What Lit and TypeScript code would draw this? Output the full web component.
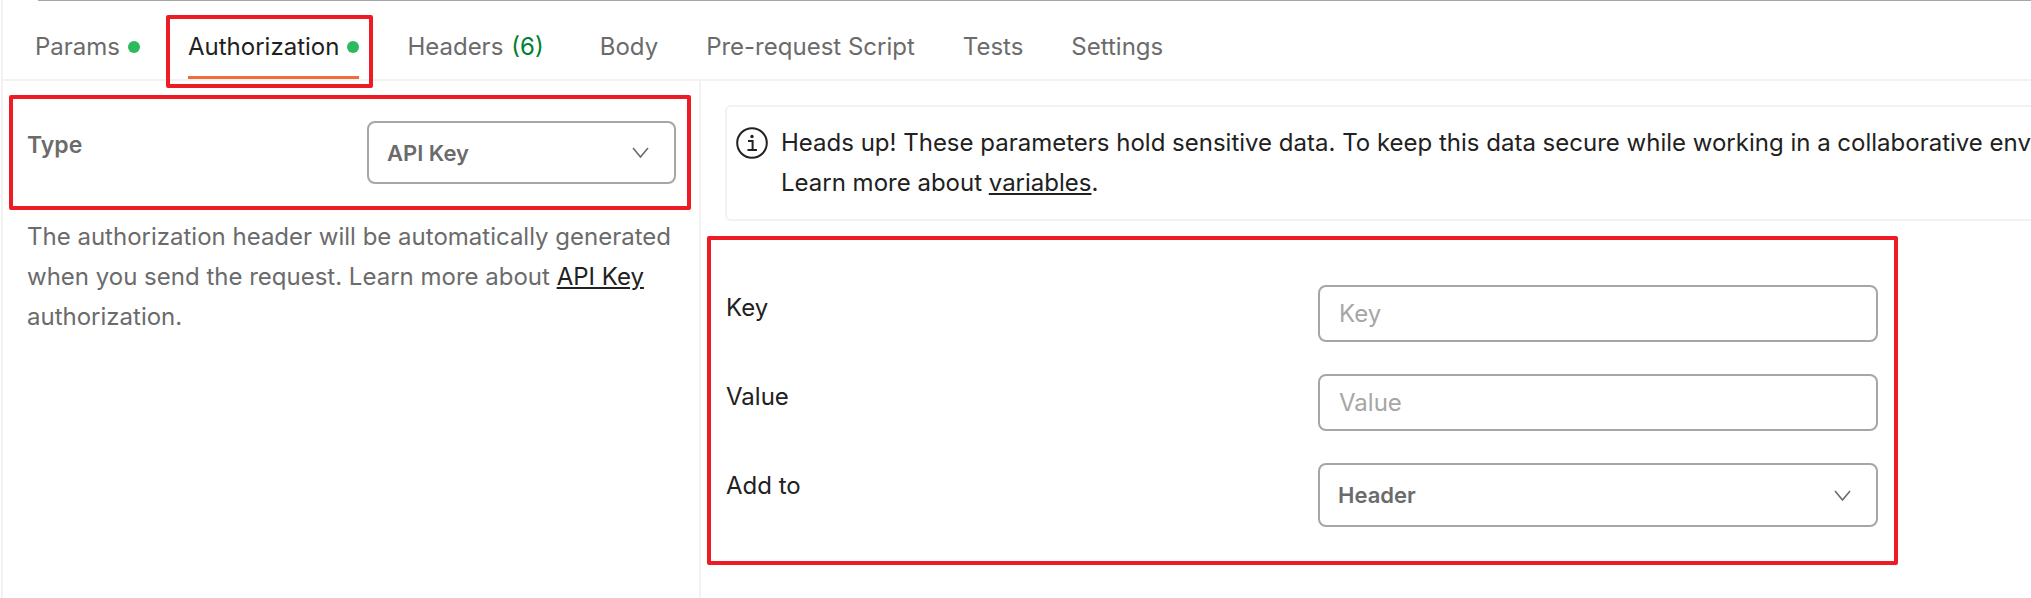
import { LitElement, css, html, svg } from "lit";
import { customElement } from "lit/decorators.js";

const TABS = [
  { label: "Params", dot: true },
  { label: "Authorization", dot: true, active: true },
  { label: "Headers", count: "(6)" },
  { label: "Body" },
  { label: "Pre-request Script" },
  { label: "Tests" },
  { label: "Settings" },
];

const chevron = svg`<svg class="chevron" width="17" height="11" viewBox="0 0 17 11" fill="none">
  <path d="M1 1l7.5 9L16 1" stroke="#6b6b6b" stroke-width="1.6" />
</svg>`;

const infoIcon = svg`<svg class="info" width="32" height="32" viewBox="0 0 32 32" fill="none">
  <circle cx="16" cy="16" r="14.8" stroke="#212121" stroke-width="2" />
  <circle cx="16" cy="9.5" r="1.7" fill="#212121" />
  <path d="M12 14h4.6v9M11.5 23h9.5" stroke="#212121" stroke-width="2" />
</svg>`;

@customElement("app-root")
export class AppRoot extends LitElement {
  private renderTab(tab: (typeof TABS)[number]) {
    return html`
      <div class="tab ${tab.active ? "active" : ""} ${tab.count ? "counted" : ""}">
        <span>${tab.label}</span>
        ${tab.count ? html`<span class="count">${tab.count}</span>` : ""}
        ${tab.dot ? html`<i class="dot"></i>` : ""}
      </div>
    `;
  }

  render() {
    return html`
      <div class="rule"></div>
      <nav class="tabs">${TABS.map((tab) => this.renderTab(tab))}</nav>
      <main class="panes">
        <section class="left">
          <div class="type-row">
            <span class="type-label">Type</span>
            <div class="select type-select"><span>API Key</span>${chevron}</div>
          </div>
          <p class="help">
            The authorization header will be automatically generated when you
            send the request. Learn more about <a>API Key</a> authorization.
          </p>
        </section>
        <section class="right">
          <div class="banner">
            ${infoIcon}
            <div class="banner-text">
              <div>
                Heads up! These parameters hold sensitive data. To keep this
                data secure while working in a collaborative environment, we
                recommend using variables.
              </div>
              <div>Learn more about <a>variables</a>.</div>
            </div>
          </div>
          <div class="form">
            <label>Key</label>
            <input placeholder="Key" />
            <label>Value</label>
            <input placeholder="Value" />
            <label>Add to</label>
            <div class="select"><span>Header</span>${chevron}</div>
          </div>
        </section>
      </main>
      <div class="mark mark-tab"></div>
      <div class="mark mark-type"></div>
      <div class="mark mark-form"></div>
    `;
  }

  static styles = css`
    :host {
      display: block;
      position: relative;
      width: 2031px;
      height: 598px;
      overflow: hidden;
      background: #fff;
      font-family: Inter, "Liberation Sans", sans-serif;
      font-size: 24px;
      line-height: 40px;
      color: #212121;
      box-sizing: border-box;
      border-left: 2px solid #f2f2f2;
      margin-left: 1px;
    }

    .rule {
      height: 1px;
      margin-left: 35px;
      background: #a6a6a6;
    }

    .tabs {
      display: flex;
      gap: 48px;
      height: 78px;
      padding-left: 32px;
      border-bottom: 2px solid #f2f2f2;
    }

    .tab {
      display: flex;
      align-items: flex-start;
      gap: 8px;
      height: 78px;
      padding-top: 26px;
      box-sizing: border-box;
      color: #6b6b6b;
    }

    .tab.active {
      color: #212121;
      border-bottom: 3px solid #f26b3a;
    }

    .tab.counted {
      margin-right: 8px;
    }

    .count {
      color: #007f31;
    }

    .dot {
      width: 12px;
      height: 12px;
      margin-top: 14px;
      border-radius: 50%;
      background: #2dba5c;
    }

    .panes {
      display: flex;
      height: 517px;
    }

    .left {
      width: 698px;
      box-sizing: border-box;
      flex: none;
      padding: 40px 23px 0 24px;
      border-right: 2px solid #f2f2f2;
    }

    .type-row {
      display: flex;
      justify-content: space-between;
      align-items: flex-start;
    }

    .type-label {
      font-size: 23px;
      font-weight: 600;
      color: #6b6b6b;
      padding-top: 4px;
    }

    .select {
      display: flex;
      align-items: center;
      justify-content: space-between;
      height: 64px;
      padding: 0 25px 0 18px;
      box-sizing: border-box;
      border: 2px solid #a6a6a6;
      border-radius: 8px;
      font-size: 22px;
      font-weight: 600;
      color: #6b6b6b;
    }

    .type-select {
      width: 309px;
      height: 63px;
    }

    .help {
      margin: 33px 0 0;
      color: #6b6b6b;
    }

    a {
      color: #212121;
      text-decoration: underline;
    }

    .right {
      flex: 1;
      min-width: 0;
      padding: 24px 0 0 24px;
    }

    .banner {
      display: flex;
      align-items: flex-start;
      gap: 13px;
      height: 116px;
      box-sizing: border-box;
      padding: 16px 0 0 9px;
      margin-right: -40px;
      border: 2px solid #f2f2f2;
      border-radius: 6px;
    }

    .info {
      flex: none;
      margin-top: 4px;
    }

    .banner-text {
      white-space: nowrap;
    }

    .form {
      display: grid;
      grid-template-columns: 592px 560px;
      row-gap: 32px;
      margin: 64px 0 0 1px;
    }

    label {
      padding-top: 3px;
    }

    input {
      height: 57px;
      width: 100%;
      box-sizing: border-box;
      padding: 0 19px;
      border: 2px solid #a6a6a6;
      border-radius: 8px;
      outline: none;
      font: inherit;
      color: #212121;
    }

    input::placeholder {
      color: #a6a6a6;
    }

    .mark {
      position: absolute;
      box-sizing: border-box;
      border: 4px solid #ed1c24;
      border-radius: 2px;
    }

    .mark-tab {
      left: 163px;
      top: 15px;
      width: 207px;
      height: 73px;
    }

    .mark-type {
      left: 6px;
      top: 95px;
      width: 682px;
      height: 115px;
    }

    .mark-form {
      left: 704px;
      top: 236px;
      width: 1191px;
      height: 329px;
    }
  `;
}
